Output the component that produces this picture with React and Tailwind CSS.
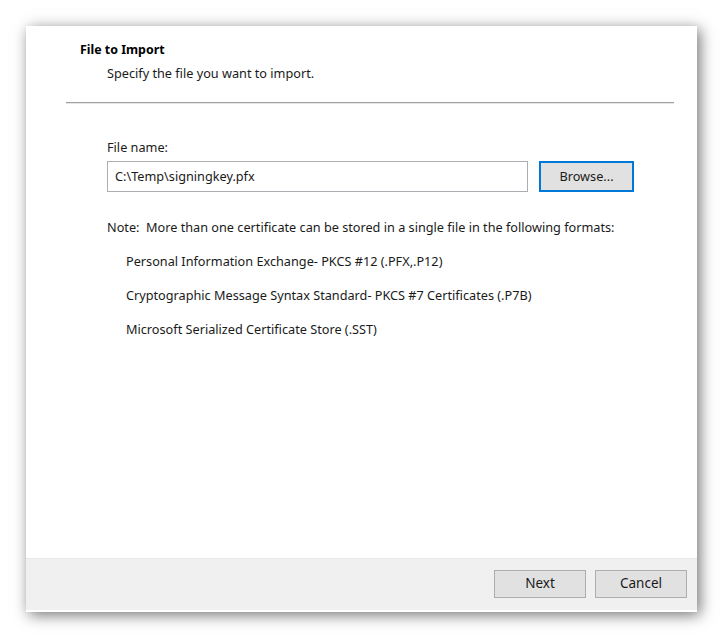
const formats = [
  'Personal Information Exchange- PKCS #12 (.PFX,.P12)',
  'Cryptographic Message Syntax Standard- PKCS #7 Certificates (.P7B)',
  'Microsoft Serialized Certificate Store (.SST)',
];

const App = () => {
  return (
    <div className="w-[722px] h-[637px] bg-white pt-[26px] pl-[26px] font-['Noto_Sans',sans-serif] text-[12.7px] text-[#1a1a1a]">
      <div className="w-[671px] h-[586px] bg-white flex flex-col shadow-[3px_3px_14px_rgba(0,0,0,0.55)]">
        {/* Header */}
        <div className="pl-[54px] pt-[16px]">
          <h1 className="font-bold text-black text-[12.4px] leading-[16px]">File to Import</h1>
          <p className="pl-[27px] mt-[7px] leading-[16px]">Specify the file you want to import.</p>
        </div>
        <div className="ml-[40px] mr-[23px] mt-[21px] h-[2px] border-t border-[#a0a0a0] bg-[#e6e6e6]" />

        {/* Body */}
        <div className="flex-1 pl-[81px] pt-[35px]">
          <label className="block leading-[16px]">File name:</label>
          <div className="flex mt-[6px] gap-[11px]">
            <div className="w-[421px] h-[31px] border border-[#abadb3] flex items-center pl-[7px] leading-none">
              C:\Temp\signingkey.pfx
            </div>
            <button className="w-[95px] h-[31px] border-2 border-[#0078d7] bg-[#e1e1e1] leading-none">
              Browse...
            </button>
          </div>
          <p className="mt-[27px] leading-[16px]">
            Note:&nbsp; More than one certificate can be stored in a single file in the following formats:
          </p>
          <ul className="pl-[19px] mt-[18px] flex flex-col gap-[18px]">
            {formats.map((f) => (
              <li key={f} className="leading-[16px]">{f}</li>
            ))}
          </ul>
        </div>

        {/* Footer */}
        <div className="h-[54px] bg-[#f0f0f0] border-t border-[#e8e8e8] border-b-2 border-b-white flex items-start justify-end gap-[9px] pt-[11px] pr-[10px]">
          <button className="w-[92px] h-[28px] border border-[#adadad] bg-[#e1e1e1] text-[13.5px] leading-none">Next</button>
          <button className="w-[92px] h-[28px] border border-[#adadad] bg-[#e1e1e1] text-[13.5px] leading-none">Cancel</button>
        </div>
      </div>
    </div>
  );
};

export default App;
